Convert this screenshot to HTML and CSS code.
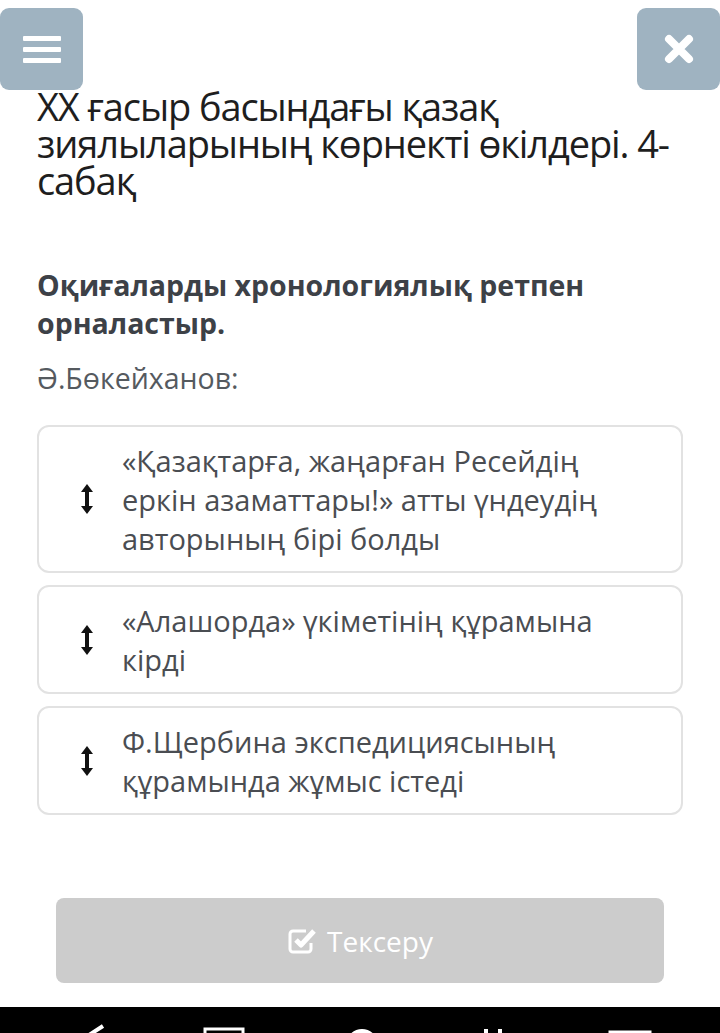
FILE: index.html
```html
<!DOCTYPE html>
<html lang="kk">
<head>
    <meta charset="UTF-8">
    <meta name="viewport" content="width=device-width, initial-scale=1.0">
    <title>Хронология</title>
    <link rel="stylesheet" href="styles.css">
</head>
<body>
    <div class="page">
        <div class="topbar">
            <button class="nav-btn" aria-label="Мәзір">
                <svg width="38" height="32" viewBox="0 0 38 32">
                    <rect x="0" y="3" width="38" height="5" rx="1" fill="#fff"/>
                    <rect x="0" y="14" width="38" height="5" rx="1" fill="#fff"/>
                    <rect x="0" y="25" width="38" height="5" rx="1" fill="#fff"/>
                </svg>
            </button>
            <button class="nav-btn" aria-label="Жабу">
                <svg width="30" height="30" viewBox="0 0 30 30">
                    <path d="M5 5 L25 25 M25 5 L5 25" stroke="#fff" stroke-width="8" stroke-linecap="round"/>
                </svg>
            </button>
        </div>

        <h1 class="title">XX ғасыр басындағы қазақ зиялыларының көрнекті өкілдері. 4-<wbr>сабақ</h1>

        <div class="task">
            <h2>Оқиғаларды хронологиялық ретпен орналастыр.</h2>
            <p class="subject">Ә.Бөкейханов:</p>

            <ul class="items">
                <li class="item">
                    <span class="handle">
                        <svg width="14" height="32" viewBox="0 0 14 32">
                            <path d="M7 1 L13 9 L9 9 L9 23 L13 23 L7 31 L1 23 L5 23 L5 9 L1 9 Z" fill="#111"/>
                        </svg>
                    </span>
                    <span class="text">«Қазақтарға, жаңарған Ресейдің еркін азаматтары!» атты үндеудің авторының бірі болды</span>
                </li>
                <li class="item">
                    <span class="handle">
                        <svg width="14" height="32" viewBox="0 0 14 32">
                            <path d="M7 1 L13 9 L9 9 L9 23 L13 23 L7 31 L1 23 L5 23 L5 9 L1 9 Z" fill="#111"/>
                        </svg>
                    </span>
                    <span class="text">«Алашорда» үкіметінің құрамына кірді</span>
                </li>
                <li class="item">
                    <span class="handle">
                        <svg width="14" height="32" viewBox="0 0 14 32">
                            <path d="M7 1 L13 9 L9 9 L9 23 L13 23 L7 31 L1 23 L5 23 L5 9 L1 9 Z" fill="#111"/>
                        </svg>
                    </span>
                    <span class="text">Ф.Щербина экспедициясының құрамында жұмыс істеді</span>
                </li>
            </ul>
        </div>

        <div class="actions">
            <button class="check-btn" disabled>
                <svg width="30" height="28" viewBox="0 0 30 28">
                    <path d="M19 4 H6 a3 3 0 0 0 -3 3 V22 a3 3 0 0 0 3 3 H21 a3 3 0 0 0 3 -3 V16" fill="none" stroke="#fff" stroke-width="3"/>
                    <path d="M9 13 L14 18 L27 4" fill="none" stroke="#fff" stroke-width="5" stroke-linejoin="round"/>
                </svg>
                Тексеру
            </button>
        </div>
    </div>

    <div class="system-bar">
        <svg width="720" height="26" viewBox="0 0 720 26">
            <path d="M103 19 L86 30 L103 40" fill="none" stroke="#fff" stroke-width="4"/>
            <rect x="205" y="22" width="38" height="14" fill="none" stroke="#fff" stroke-width="3"/>
            <circle cx="362" cy="38" r="14" fill="none" stroke="#fff" stroke-width="4"/>
            <rect x="484" y="22" width="4" height="10" fill="#fff"/>
            <rect x="498" y="22" width="4" height="10" fill="#fff"/>
            <rect x="610" y="25" width="40" height="12" fill="none" stroke="#fff" stroke-width="3"/>
        </svg>
    </div>
</body>
</html>
```

FILE: styles.css
```css
body {
    margin: 0;
    font-family: 'Open Sans', 'Noto Sans', sans-serif;
    background-color: #fff;
    color: #222;
}

.page {
    height: 1007px;
    display: flex;
    flex-direction: column;
}

.topbar {
    display: flex;
    justify-content: space-between;
    padding-top: 8px;
}

.nav-btn {
    width: 83px;
    height: 82px;
    border: none;
    border-radius: 9px;
    background-color: #9fb3c1;
    display: flex;
    align-items: center;
    justify-content: center;
    padding: 0;
    cursor: pointer;
}

.title {
    margin: -2px 0 0;
    padding: 0 37px;
    font-size: 38px;
    font-weight: normal;
    font-stretch: 90%;
    letter-spacing: -1.1px;
    line-height: 37px;
    color: #1e1e1e;
}

.task {
    padding: 0 37px;
    margin-top: 67px;
}

.task h2 {
    margin: 0;
    font-size: 28.5px;
    line-height: 38px;
    font-weight: bold;
    color: #3d4147;
}

.subject {
    margin: 17px 0 28px;
    font-size: 28.5px;
    line-height: 38px;
    color: #555a5f;
}

.items {
    list-style: none;
    margin: 0;
    padding: 0;
    display: flex;
    flex-direction: column;
    gap: 12px;
}

.item {
    display: flex;
    align-items: center;
    gap: 28px;
    border: 2px solid #e2e2e2;
    border-radius: 12px;
    padding: 13.5px 40px 13.5px 41px;
}

.handle {
    width: 14px;
    display: flex;
    flex-shrink: 0;
}

.text {
    font-size: 29px;
    line-height: 39px;
    color: #4a4d52;
}

.actions {
    margin-top: auto;
    padding: 0 56px 24px;
}

.check-btn {
    width: 100%;
    height: 85px;
    border: none;
    border-radius: 8px;
    background-color: #cccccc;
    color: #fff;
    font-family: 'Open Sans', sans-serif;
    font-size: 28px;
    display: flex;
    align-items: center;
    justify-content: center;
    gap: 10px;
}

.system-bar {
    height: 26px;
    background-color: #000;
    overflow: hidden;
}

.system-bar svg {
    display: block;
}
```
